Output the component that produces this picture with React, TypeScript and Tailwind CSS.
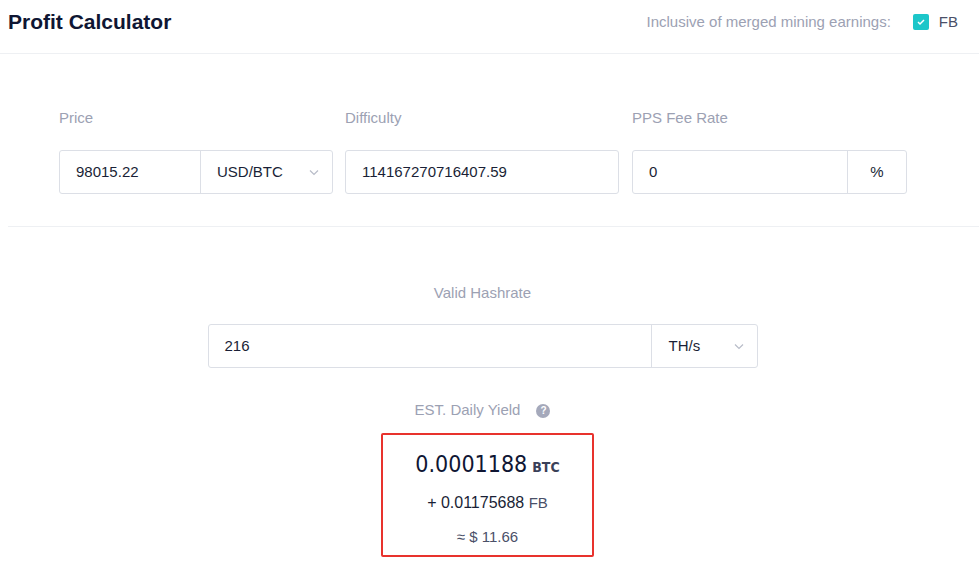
import React from "react";

const Chevron = () => (
  <svg width="12" height="12" viewBox="0 0 12 12" fill="none" stroke="#b8bcc8" strokeWidth="1.2"><path d="M2 4.5l4 4 4-4" /></svg>
);

export default function App() {
  const f = { fontFamily: "'Liberation Sans', Arial, sans-serif" };
  return (
    <div style={f} className="w-[979px] h-[578px] bg-white overflow-hidden text-[#1a1f36]">
      <div className="h-[54px] border-b border-[#eef0f3] flex items-start justify-between pl-[8px] pr-[21px] pt-[6px]">
        <div className="text-[21px] font-bold text-[#0f1633]">Profit Calculator</div>
        <div className="flex items-center text-[15px] mt-[5px]">
          <span className="text-[#9ca1b3]">Inclusive of merged mining earnings:</span>
          <span className="ml-[22px] w-[16px] h-[16px] rounded-[2px] bg-[#1cc6c9] flex items-center justify-center">
            <svg width="10" height="10" viewBox="0 0 10 10" fill="none" stroke="white" strokeWidth="1.5"><path d="M2 5l2 2 4-4" /></svg>
          </span>
          <span className="ml-[10px] text-[#4a5068]">FB</span>
        </div>
      </div>
      <div className="ml-[8px] border-b border-[#eef0f3] pt-[53px] pb-[32px] pl-[51px] flex gap-[12px] text-[15px]">
        <div className="w-[274px]">
          <div className="text-[#9ca1b3] mb-[24px] h-[19px]">Price</div>
          <div className="flex h-[44px] border border-[#dcdfe6] rounded-[3px]">
            <div className="w-[141px] border-r border-[#dcdfe6] flex items-center px-[16px]">98015.22</div>
            <div className="flex-1 flex items-center justify-between pl-[16px] pr-[12px]">USD/BTC<Chevron /></div>
          </div>
        </div>
        <div className="w-[274px]">
          <div className="text-[#9ca1b3] mb-[24px] h-[19px]">Difficulty</div>
          <div className="flex h-[44px] border border-[#dcdfe6] rounded-[3px] items-center px-[16px]">114167270716407.59</div>
        </div>
        <div className="w-[275px] ml-[1px]">
          <div className="text-[#9ca1b3] mb-[24px] h-[19px]">PPS Fee Rate</div>
          <div className="flex h-[44px] border border-[#dcdfe6] rounded-[3px]">
            <div className="flex-1 border-r border-[#dcdfe6] flex items-center px-[16px]">0</div>
            <div className="w-[58px] flex items-center justify-center">%</div>
          </div>
        </div>
      </div>
      <div className="flex flex-col items-center text-[15px] pt-[55px]">
        <div className="text-[#9ca1b3] h-[19px] ml-[-14px]">Valid Hashrate</div>
        <div className="flex h-[44px] w-[550px] border border-[#dcdfe6] rounded-[3px] mt-[23px] ml-[-14px]">
          <div className="w-[443px] border-r border-[#dcdfe6] flex items-center px-[16px]">216</div>
          <div className="flex-1 flex items-center justify-between pl-[17px] pr-[12px]">TH/s<Chevron /></div>
        </div>
        <div className="flex items-center mt-[33px] ml-[-14px] h-[19px]">
          <span className="text-[#9ca1b3]">EST. Daily Yield</span>
          <span className="ml-[16px] w-[14px] h-[14px] rounded-full bg-[#a5a9bb] text-white text-[10px] font-bold flex items-center justify-center">?</span>
        </div>
        <div className="mt-[13px] ml-[-4px] w-[213px] h-[124px] border-2 border-[#e8322d] rounded-[2px] flex flex-col items-center pt-[12px]">
          <div className="flex items-baseline" style={{ fontFamily: "'DejaVu Sans Condensed', Roboto, sans-serif" }}>
            <span className="text-[23px] font-medium text-[#0f1633]">0.0001188</span>
            <span className="ml-[5px] text-[14px] font-bold text-[#3a4058]">BTC</span>
          </div>
          <div className="mt-[9px] text-[16px]">+ 0.01175688 <span className="text-[#4a5068] text-[15px]">FB</span></div>
          <div className="mt-[11px] text-[15px] text-[#4a5068]">≈ $ 11.66</div>
        </div>
      </div>
    </div>
  );
}
